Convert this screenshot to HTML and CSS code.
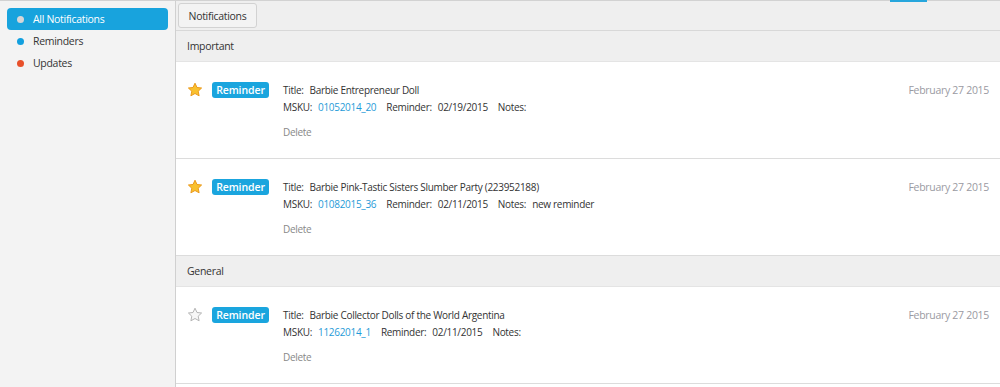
FILE: index.html
```html
<!DOCTYPE html>
<html lang="en">
<head>
    <meta charset="UTF-8">
    <title>Notifications</title>
    <link rel="stylesheet" href="styles.css">
</head>
<body>
<div class="app">
    <div class="sidebar">
        <div class="nav-item active"><span class="dot dot-gray"></span>All Notifications</div>
        <div class="nav-item"><span class="dot dot-blue"></span>Reminders</div>
        <div class="nav-item"><span class="dot dot-red"></span>Updates</div>
    </div>
    <div class="main">
        <div class="toolbar">
            <button class="tab-btn">Notifications</button>
            <span class="tab-mark"></span>
        </div>

        <div class="section-head">Important</div>
        <div class="note">
            <svg class="star" width="16" height="16" viewBox="0 0 16 16"><path d="M8 1.2l2 4.3 4.6.5-3.4 3.2.9 4.6L8 11.5l-4.1 2.3.9-4.6L1.4 6l4.6-.5z" fill="#f9c12e" stroke="#eb9a1c" stroke-width="1" stroke-linejoin="round"/></svg>
            <span class="badge">Reminder</span>
            <div class="body">
                <div class="line"><span class="lbl">Title:</span>Barbie Entrepreneur Doll</div>
                <div class="line"><span class="lbl">MSKU:</span><a class="sku">01052014_20</a><span class="lbl gap">Reminder:</span>02/19/2015<span class="lbl gap">Notes:</span></div>
                <div class="del">Delete</div>
            </div>
            <div class="date">February 27 2015</div>
        </div>
        <div class="note">
            <svg class="star" width="16" height="16" viewBox="0 0 16 16"><path d="M8 1.2l2 4.3 4.6.5-3.4 3.2.9 4.6L8 11.5l-4.1 2.3.9-4.6L1.4 6l4.6-.5z" fill="#f9c12e" stroke="#eb9a1c" stroke-width="1" stroke-linejoin="round"/></svg>
            <span class="badge">Reminder</span>
            <div class="body">
                <div class="line"><span class="lbl">Title:</span>Barbie Pink-Tastic Sisters Slumber Party (223952188)</div>
                <div class="line"><span class="lbl">MSKU:</span><a class="sku">01082015_36</a><span class="lbl gap">Reminder:</span>02/11/2015<span class="lbl gap">Notes:</span>new reminder</div>
                <div class="del">Delete</div>
            </div>
            <div class="date">February 27 2015</div>
        </div>

        <div class="section-head">General</div>
        <div class="note">
            <svg class="star" width="16" height="16" viewBox="0 0 16 16"><path d="M8 1.2l2 4.3 4.6.5-3.4 3.2.9 4.6L8 11.5l-4.1 2.3.9-4.6L1.4 6l4.6-.5z" fill="#f7f7f7" stroke="#b5b5b5" stroke-width="1" stroke-linejoin="round"/></svg>
            <span class="badge">Reminder</span>
            <div class="body">
                <div class="line"><span class="lbl">Title:</span>Barbie Collector Dolls of the World Argentina</div>
                <div class="line"><span class="lbl">MSKU:</span><a class="sku">11262014_1</a><span class="lbl gap">Reminder:</span>02/11/2015<span class="lbl gap">Notes:</span></div>
                <div class="del">Delete</div>
            </div>
            <div class="date">February 27 2015</div>
        </div>
    </div>
</div>
</body>
</html>
```
FILE: styles.css
```css
body {
    margin: 0;
    font-family: "Open Sans", "Liberation Sans", sans-serif;
    font-size: 10px;
    letter-spacing: -0.3px;
    color: #333;
    background: #fff;
}
.app {
    display: flex;
    min-height: 387px;
    border-top: 1px solid #d2d2d2;
}
.sidebar {
    width: 176px;
    flex-shrink: 0;
    background: #f3f3f3;
    border-right: 1px solid #d0d0d0;
    padding: 7px 7px 0 7px;
    box-sizing: border-box;
    font-size: 10.5px;
}
.nav-item {
    display: flex;
    align-items: center;
    height: 22px;
    padding-left: 10px;
    color: #333;
}
.nav-item.active {
    background: #18a3dd;
    color: #fff;
    border-radius: 4px;
}
.dot {
    width: 7px;
    height: 7px;
    border-radius: 50%;
    margin-right: 9px;
}
.dot-gray { background: #d6d6d8; }
.dot-blue { background: #12a0df; }
.dot-red { background: #e8502a; }

.main {
    flex: 1;
    display: flex;
    flex-direction: column;
}
.toolbar {
    position: relative;
    height: 27px;
    background: #efefef;
    border-bottom: 1px solid #d8d8d8;
    padding: 2px 0 0 2px;
}
.tab-btn {
    height: 25px;
    width: 79px;
    padding: 0;
    font-family: inherit;
    font-size: 10.5px;
    letter-spacing: -0.3px;
    color: #333;
    background: #f3f3f3;
    border: 1px solid #d2d2d2;
    border-radius: 3px;
}
.tab-mark {
    position: absolute;
    top: -1px;
    left: 714px;
    width: 37px;
    height: 2px;
    background: #27a6dc;
}
.section-head {
    height: 30px;
    line-height: 31px;
    padding-left: 11px;
    background: #efefef;
    border-bottom: 1px solid #e4e4e4;
    font-size: 10.5px;
}
.note {
    display: flex;
    align-items: flex-start;
    height: 97px;
    padding: 20px 11px 0 11px;
    box-sizing: border-box;
    border-bottom: 1px solid #dcdcdc;
}
.star {
    flex-shrink: 0;
}
.badge {
    margin-left: 9px;
    width: 57px;
    height: 16px;
    line-height: 16px;
    text-align: center;
    background: #1aa5de;
    color: #fff;
    border-radius: 3px;
    font-size: 10.5px;
    font-weight: 600;
    letter-spacing: -0.1px;
    flex-shrink: 0;
}
.body {
    margin-left: 14px;
    flex: 1;
}
.line {
    height: 17px;
    line-height: 17px;
}
.lbl {
    margin-right: 6px;
}
.gap {
    margin-left: 10px;
}
.sku {
    color: #1f9bd8;
}
.del {
    margin-top: 9px;
    color: #888;
}
.date {
    color: #9a9aa2;
    font-size: 10.5px;
    line-height: 17px;
    flex-shrink: 0;
}
```
